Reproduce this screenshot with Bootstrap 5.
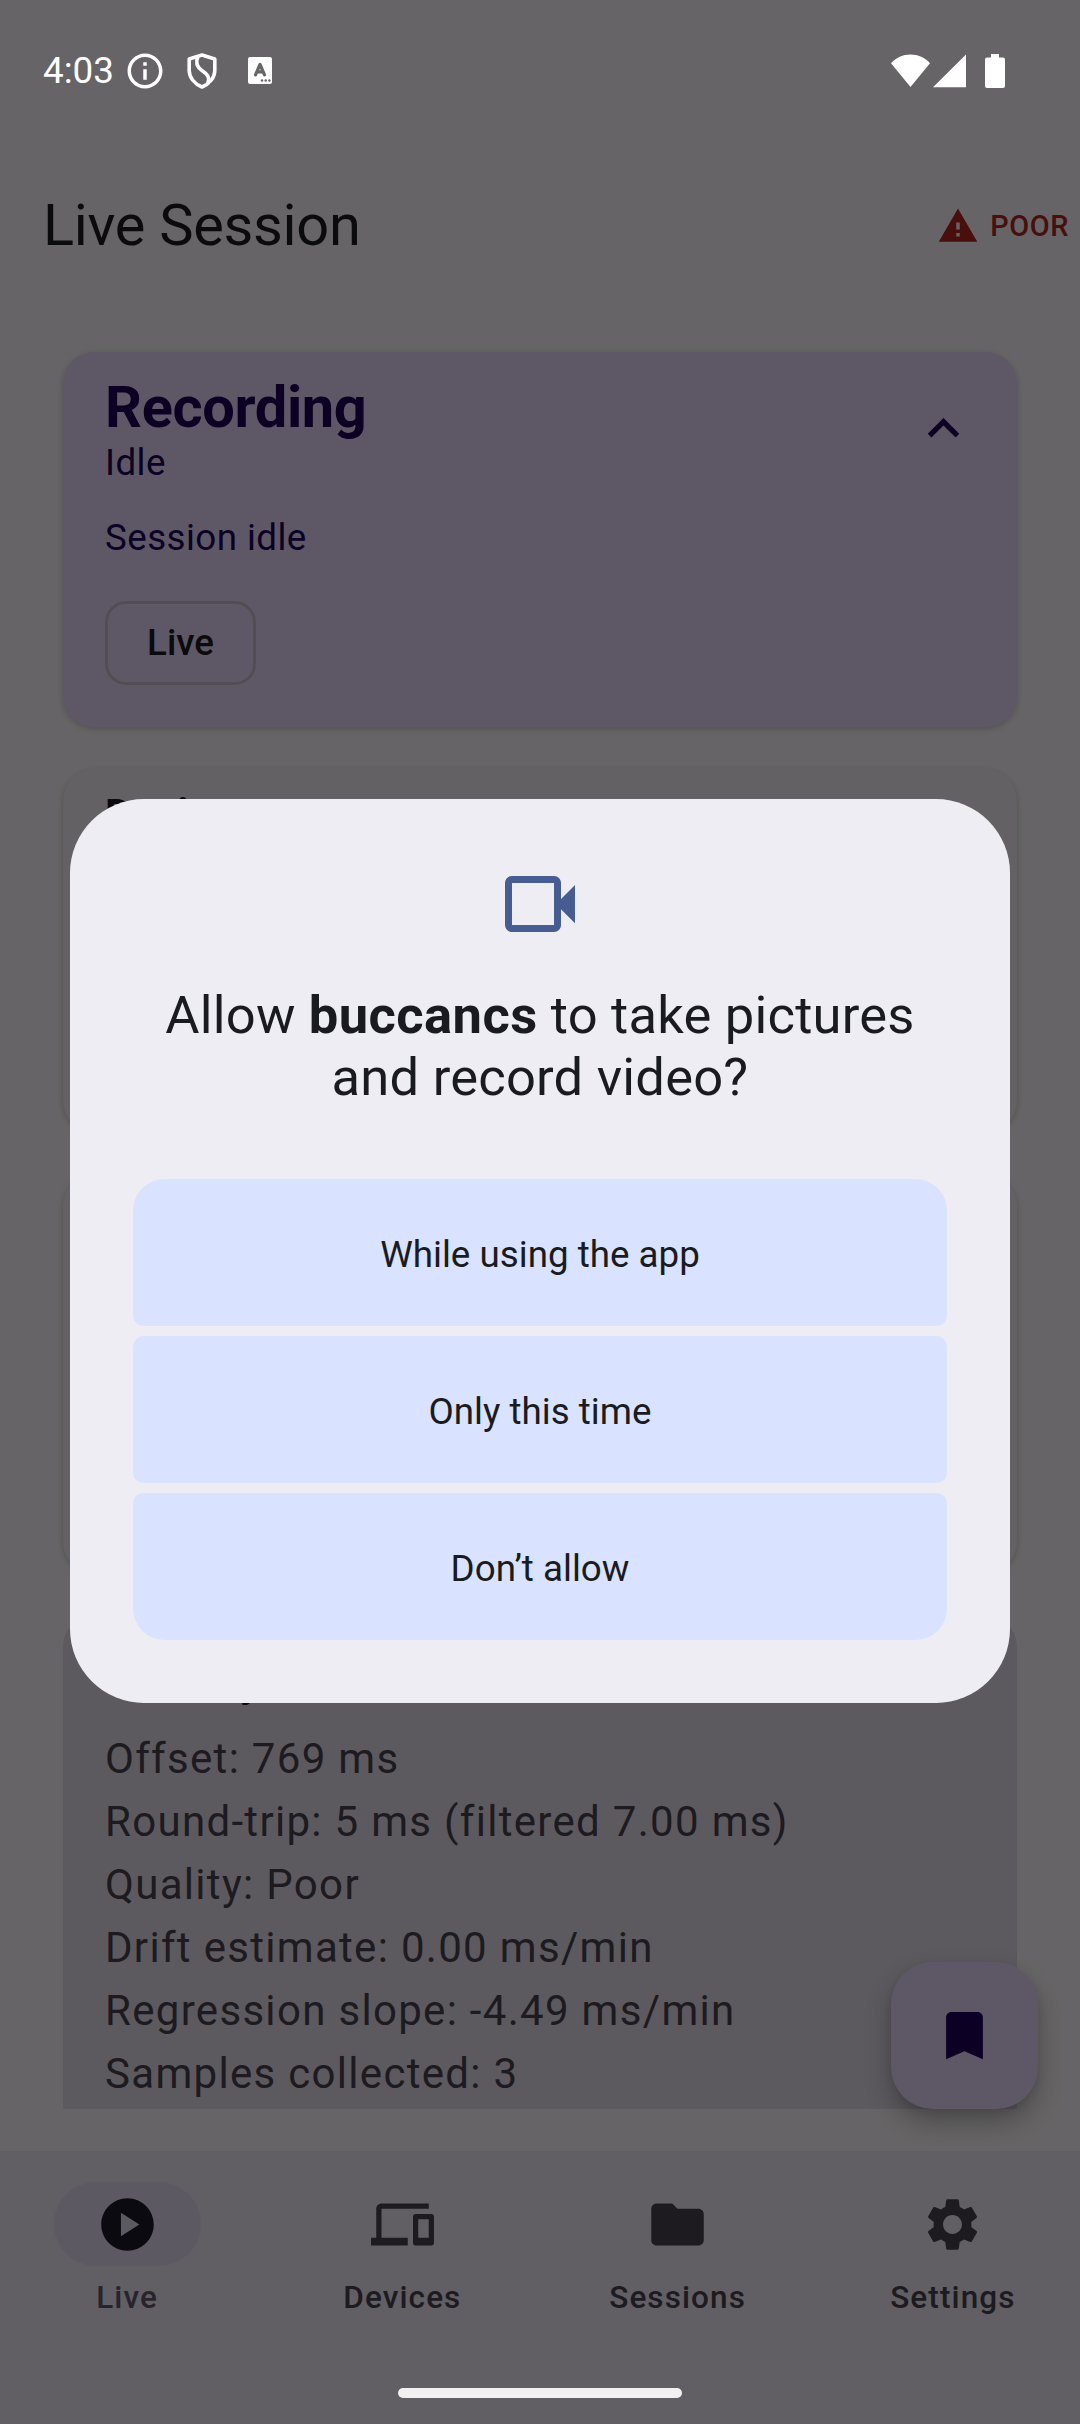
<!DOCTYPE html>
<html lang="en">
<head>
<meta charset="utf-8">
<meta name="viewport" content="width=device-width, initial-scale=1">
<title>Live Session</title>
<link href="https://cdn.jsdelivr.net/npm/bootstrap@5.3.0/dist/css/bootstrap.min.css" rel="stylesheet">
<style>
  body { font-family: Roboto, sans-serif; color: #1c1b1f; background: #666466; }
  .screen { width: 1080px; height: 2424px; background: #fffbfe; }
  svg { display: block; flex: none; }

  /* system bar */
  .statusbar { z-index: 3; height: 142px; padding: 0 75px 0 43px; color: #fff; font-size: 36.75px; line-height: 43px; }
  .statusbar > div { height: 43px; margin-top: 49px; }
  .sys-info { margin-left: 10px; }
  .sys-shield { margin-left: 21px; }
  .sys-key { margin-left: 31px; }
  .sys-cell { margin-left: 3px; }
  .sys-batt { margin-left: 19px; }

  /* header */
  .topbar { height: 168px; margin-top: 142px; padding: 0 11px 0 43px; }
  .screen-title { font-size: 57.75px; line-height: 73.5px; font-weight: 400; letter-spacing: -.3px; }
  .quality { color: #b3261e; font-size: 28.9px; line-height: 42px; letter-spacing: .55px; font-weight: 500; gap: 11px; }

  /* cards */
  .feed { padding: 42px 63px 0; gap: 42px; height: 1799px; }
  .panel { border-radius: 31.5px; padding: 0 42px; background: #f7f2fa; flex: none;
           box-shadow: 0 2px 6px rgba(0,0,0,.2); }
  .panel-rec { height: 375px; background: #eaddff; color: #21005d; padding-top: 19px; }
  .panel-dev { height: 363px; padding-top: 14px; }
  .panel-mid { height: 399px; }
  .panel-sync { flex: 1 1 0; background: #e7e0ec; color: #49454f; border-radius: 31.5px 31.5px 0 0; box-shadow: none; padding-top: 35px; }
  .rec-title { font-size: 57.75px; line-height: 72.5px; font-weight: 700; letter-spacing: -.35px; }
  .rec-line { font-size: 36.75px; line-height: 37.5px; letter-spacing: .42px; }
  .rec-note { margin: 37.5px 0 45px; }
  .rec-toggle { margin-top: 26px; }
  .sub-title { font-size: 42px; line-height: 63px; font-weight: 700; letter-spacing: .39px; color: #1c1b1f; }
  .sync-list { margin-top: 14px; font-size: 42px; line-height: 63px; letter-spacing: 1.31px; }
  .mode-chip { width: 151px; height: 84px; border: 3px solid #cac4d0; border-radius: 21px; color: #1c1b1f;
               font-size: 36.75px; line-height: 52.5px; font-weight: 500; }

  .fab { right: 42px; top: 1962px; width: 147px; height: 147px; border-radius: 42px; background: #eaddff; color: #21005d;
         box-shadow: 0 14px 26px rgba(0,0,0,.25), 0 3px 10px rgba(0,0,0,.1); }

  /* bottom navigation */
  .tabs { z-index: 1; height: 273px; background: #f3edf7; padding-top: 31px; gap: 21px; color: #49454f; }
  .tab-pill { width: 147px; height: 84px; border-radius: 42px; }
  .tab-on .tab-pill { background: #e8def8; color: #1d192b; }
  .tab-on { color: #625b71; }
  .tab-text { font-size: 31.5px; line-height: 42px; font-weight: 500; letter-spacing: 1.1px; margin-top: 11px; }

  /* permission dialog */
  .dim { z-index: 2; background: rgba(0,0,0,.6); }
  .ask { z-index: 4; left: 70px; top: 799px; width: 940px; height: 904px; border-radius: 74px; background: #eeedf3; color: #1a1b20; padding: 63px; }
  .ask-title { font-size: 52.5px; line-height: 62px; font-weight: 400; letter-spacing: .22px; margin: 38px 0 71px; }
  .ask-title b { letter-spacing: .4px; }
  .choices { gap: 10px; }
  .choice { height: 147px; border: 0; border-radius: 10.5px; background: #d9e2ff; color: #1a1b20; font-size: 36.75px; font-weight: 400; padding: 4px 0 0; }
  .choice:first-child { border-top-left-radius: 31.5px; border-top-right-radius: 31.5px; }
  .choice:last-child { border-bottom-left-radius: 31.5px; border-bottom-right-radius: 31.5px; }
  .homebar { z-index: 5; left: 398px; bottom: 26px; width: 284px; height: 10px; border-radius: 5px; background: #f1f1f1; }
</style>
</head>
<body class="m-0">
<div class="screen position-relative overflow-hidden d-flex flex-column">

  <header class="topbar d-flex align-items-center justify-content-between flex-shrink-0">
    <h1 class="screen-title m-0">Live Session</h1>
    <div class="quality d-flex align-items-center">
      <svg width="42" height="42" viewBox="0 0 24 24" fill="currentColor"><path d="M1 21h22L12 2 1 21zm12-3h-2v-2h2v2zm0-4h-2v-4h2v4z"/></svg>
      <span>POOR</span>
    </div>
  </header>

  <main class="feed d-flex flex-column flex-shrink-0">
    <section class="panel panel-rec">
      <div class="d-flex justify-content-between align-items-start">
        <div>
          <h2 class="rec-title m-0">Recording</h2>
          <p class="rec-line m-0">Idle</p>
        </div>
        <svg class="rec-toggle" width="63" height="63" viewBox="0 0 24 24" fill="currentColor"><path d="M12 8l-6 6 1.41 1.41L12 10.83l4.59 4.58L18 14z"/></svg>
      </div>
      <p class="rec-line rec-note">Session idle</p>
      <div class="mode-chip d-flex align-items-center justify-content-center">Live</div>
    </section>

    <section class="panel panel-dev">
      <h2 class="sub-title m-0">Device Status</h2>
    </section>

    <section class="panel panel-mid"></section>

    <section class="panel panel-sync">
      <h2 class="sub-title m-0">Time Sync</h2>
      <div class="sync-list">
        <div>Offset: 769 ms</div>
        <div>Round-trip: 5 ms (filtered 7.00 ms)</div>
        <div>Quality: Poor</div>
        <div>Drift estimate: 0.00 ms/min</div>
        <div>Regression slope: -4.49 ms/min</div>
        <div>Samples collected: 3</div>
      </div>
    </section>
  </main>

  <div class="fab position-absolute d-flex align-items-center justify-content-center">
    <svg width="63" height="63" viewBox="0 0 24 24" fill="currentColor"><path d="M17 3H7c-1.1 0-2 .9-2 2v16l7-3 7 3V5c0-1.1-.9-2-2-2z"/></svg>
  </div>

  <nav class="tabs d-flex position-relative mt-auto flex-shrink-0">
    <div class="tab-on d-flex flex-column align-items-center flex-fill w-25">
      <div class="tab-pill d-flex align-items-center justify-content-center">
        <svg width="63" height="63" viewBox="0 0 24 24" fill="currentColor"><path d="M12 2C6.48 2 2 6.48 2 12s4.48 10 10 10 10-4.48 10-10S17.52 2 12 2zM9.5 16.5v-9l7 4.5-7 4.5z"/></svg>
      </div>
      <div class="tab-text">Live</div>
    </div>
    <div class="d-flex flex-column align-items-center flex-fill w-25">
      <div class="tab-pill d-flex align-items-center justify-content-center">
        <svg width="63" height="63" viewBox="0 0 24 24" fill="currentColor"><path d="M4 6h18V4H4c-1.1 0-2 .9-2 2v11H0v3h14v-3H4V6zm19 2h-6c-.55 0-1 .45-1 1v10c0 .55.45 1 1 1h6c.55 0 1-.45 1-1V9c0-.55-.45-1-1-1zm-1 9h-4v-7h4v7z"/></svg>
      </div>
      <div class="tab-text">Devices</div>
    </div>
    <div class="d-flex flex-column align-items-center flex-fill w-25">
      <div class="tab-pill d-flex align-items-center justify-content-center">
        <svg width="63" height="63" viewBox="0 0 24 24" fill="currentColor"><path d="M10 4H4c-1.1 0-1.99.9-1.99 2L2 18c0 1.1.9 2 2 2h16c1.1 0 2-.9 2-2V8c0-1.1-.9-2-2-2h-8l-2-2z"/></svg>
      </div>
      <div class="tab-text">Sessions</div>
    </div>
    <div class="d-flex flex-column align-items-center flex-fill w-25">
      <div class="tab-pill d-flex align-items-center justify-content-center">
        <svg width="63" height="63" viewBox="0 0 24 24" fill="currentColor"><path d="M19.14 12.94c.04-.3.06-.61.06-.94 0-.32-.02-.64-.07-.94l2.03-1.58c.18-.14.23-.41.12-.61l-1.92-3.32c-.12-.22-.37-.29-.59-.22l-2.39.96c-.5-.38-1.03-.7-1.62-.94l-.36-2.54c-.04-.24-.24-.41-.48-.41h-3.84c-.24 0-.43.17-.47.41l-.36 2.54c-.59.24-1.13.57-1.62.94l-2.39-.96c-.22-.08-.47 0-.59.22L2.74 8.87c-.12.21-.08.47.12.61l2.03 1.58c-.05.3-.09.63-.09.94s.02.64.07.94l-2.03 1.58c-.18.14-.23.41-.12.61l1.92 3.32c.12.22.37.29.59.22l2.39-.96c.5.38 1.03.7 1.62.94l.36 2.54c.05.24.24.41.48.41h3.84c.24 0 .44-.17.47-.41l.36-2.54c.59-.24 1.13-.56 1.62-.94l2.39.96c.22.08.47 0 .59-.22l1.92-3.32c.12-.22.07-.47-.12-.61l-2.01-1.58zM12 15.6c-1.98 0-3.6-1.62-3.6-3.6s1.62-3.6 3.6-3.6 3.6 1.62 3.6 3.6-1.62 3.6-3.6 3.6z"/></svg>
      </div>
      <div class="tab-text">Settings</div>
    </div>
  </nav>

  <div class="dim position-absolute top-0 start-0 w-100 h-100"></div>

  <div class="statusbar position-absolute top-0 start-0 w-100 d-flex justify-content-between">
    <div class="d-flex align-items-center">
      <span>4:03</span>
      <svg class="sys-info" width="42" height="42" viewBox="0 0 24 24" fill="currentColor"><path d="M11 7h2v2h-2zm0 4h2v6h-2zm1-9C6.48 2 2 6.48 2 12s4.48 10 10 10 10-4.48 10-10S17.52 2 12 2zm0 18c-4.41 0-8-3.59-8-8s3.59-8 8-8 8 3.59 8 8-3.59 8-8 8z"/></svg>
      <svg class="sys-shield" width="30" height="36" viewBox="0 0 30 36" fill="none" stroke="currentColor" stroke-width="3.6" stroke-linejoin="round"><path d="M15 2 2.2 6v11.5C2.2 24.5 7.5 31 15 34c7.5-3 12.8-9.5 12.8-16.5V6z"/><path d="M11 3.5C8 10 10 14 15 17.500S23.500 24 20.500 31"/></svg>
      <svg class="sys-key" width="24" height="27" viewBox="0 0 24 27"><rect width="24" height="27" rx="2" fill="#fff"/><g fill="none" stroke="#666466" stroke-width="3.2" stroke-linecap="round" stroke-linejoin="round"><path d="M7.5 17.8 12 7.5l4.5 10.3M9 14.800h6"/></g><g fill="#666466"><circle cx="14" cy="23.5" r="1.2"/><circle cx="17.7" cy="23.5" r="1.2"/><circle cx="21.4" cy="23.5" r="1.2"/></g></svg>
    </div>
    <div class="d-flex align-items-center">
      <svg width="39" height="34" viewBox="0 0 39 34" fill="currentColor"><path d="M0 9.3C5 3.5 12 .5 19.5 .5S34 3.5 39 9.3L19.5 33z"/></svg>
      <svg class="sys-cell" width="33" height="34" viewBox="0 0 33 34" fill="currentColor"><path d="M33 .5V33.200H0z"/></svg>
      <svg class="sys-batt" width="20" height="34" viewBox="0 0 20 34" fill="currentColor"><path d="M6 0h8v3.500h4a2 2 0 0 1 2 2V32a2 2 0 0 1-2 2H2a2 2 0 0 1-2-2V5.500a2 2 0 0 1 2-2h4z"/></svg>
    </div>
  </div>

  <div class="ask position-absolute d-flex flex-column" role="dialog">
    <svg class="mx-auto" width="84" height="84" viewBox="0 0 24 24" fill="#475d92"><path fill-rule="evenodd" d="M4 4h12c1.1 0 2 .9 2 2v4.600l4-4v10.900l-4-4V18c0 1.100-.9 2-2 2H4c-1.100 0-2-.9-2-2V6c0-1.100.9-2 2-2zm0 2v12h12V6z"/></svg>
    <h2 class="ask-title text-center">Allow <b>buccancs</b> to take pictures<br>and record video?</h2>
    <div class="choices d-flex flex-column">
      <button class="choice" type="button">While using the app</button>
      <button class="choice" type="button">Only this time</button>
      <button class="choice" type="button">Don’t allow</button>
    </div>
  </div>

  <div class="homebar position-absolute"></div>
</div>
<script src="https://cdn.jsdelivr.net/npm/bootstrap@5.3.0/dist/js/bootstrap.bundle.min.js"></script>
</body>
</html>
